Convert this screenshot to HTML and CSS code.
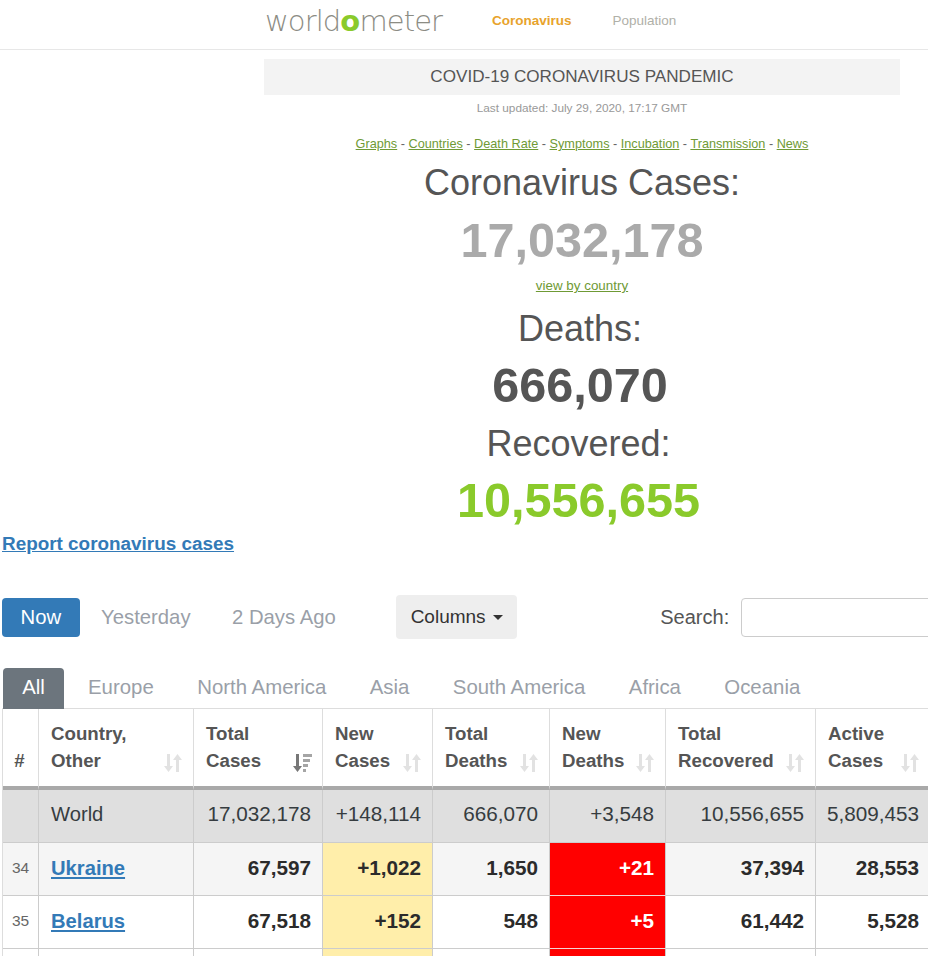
FILE: index.html
```html
<!DOCTYPE html>
<html lang="en">
<head>
  <meta charset="UTF-8" />
  <title>Worldometer - COVID-19 Coronavirus Pandemic</title>
  <link rel="stylesheet" href="styles.css">
</head>
<body>
  <div class="navbar">
    <a class="logo">world<span class="logo-o">o</span>meter</a>
    <a class="nav-link active">Coronavirus</a>
    <a class="nav-link">Population</a>
  </div>

  <div class="content">
    <div class="title-bar">COVID-19 CORONAVIRUS PANDEMIC</div>
    <div class="updated">Last updated: July 29, 2020, 17:17 GMT</div>
    <div class="quick-links">
      <a>Graphs</a> - <a>Countries</a> - <a>Death Rate</a> - <a>Symptoms</a> - <a>Incubation</a> - <a>Transmission</a> - <a>News</a>
    </div>
    <div class="counter-title">Coronavirus Cases:</div>
    <div class="counter counter-cases">17,032,178</div>
    <div class="view-link"><a>view by country</a></div>
    <div class="counter-group">
      <div class="counter-title deaths-title">Deaths:</div>
      <div class="counter counter-deaths">666,070</div>
      <div class="recovered">
        <div class="counter-title recovered-title">Recovered:</div>
        <div class="counter counter-recovered">10,556,655</div>
      </div>
    </div>
  </div>

  <a class="report-link">Report coronavirus cases</a>

  <div class="toolbar">
    <div class="day-pill selected">Now</div>
    <div class="day-pill">Yesterday</div>
    <div class="day-pill">2 Days Ago</div>
    <div class="columns-btn">Columns <span class="caret"></span></div>
    <div class="search">
      <label>Search:</label>
      <div class="search-input"></div>
    </div>
  </div>

  <div class="tabs">
    <div class="tab selected">All</div>
    <div class="tab">Europe</div>
    <div class="tab">North America</div>
    <div class="tab">Asia</div>
    <div class="tab">South America</div>
    <div class="tab">Africa</div>
    <div class="tab">Oceania</div>
  </div>

  <div class="table-wrap">
    <table>
      <colgroup>
        <col class="c-num"><col class="c-country"><col class="c-total"><col class="c-new"><col class="c-deaths"><col class="c-newd"><col class="c-rec"><col class="c-active">
      </colgroup>
      <thead>
        <tr>
          <th class="num-head">#</th>
          <th><div class="th-in"><span>Country,<br>Other</span><svg class="sort" viewBox="0 0 20 20"><path d="M4 1h3v12h3l-4.500 6L1 13h3zM13 19V7h-3l4.500-6L19 7h-3v12z"/></svg></div></th>
          <th><div class="th-in"><span>Total<br>Cases</span><svg class="sort sort-on" viewBox="0 0 20 20"><path class="dark" d="M4 1h3v12h3l-4.500 6L1 13h3z"/><path d="M11 1h9v3h-9zM11 6h7v3h-7zM11 11h5v3h-5zM11 16h3v3h-3z"/></svg></div></th>
          <th><div class="th-in"><span>New<br>Cases</span><svg class="sort" viewBox="0 0 20 20"><path d="M4 1h3v12h3l-4.500 6L1 13h3zM13 19V7h-3l4.500-6L19 7h-3v12z"/></svg></div></th>
          <th><div class="th-in"><span>Total<br>Deaths</span><svg class="sort" viewBox="0 0 20 20"><path d="M4 1h3v12h3l-4.500 6L1 13h3zM13 19V7h-3l4.500-6L19 7h-3v12z"/></svg></div></th>
          <th><div class="th-in"><span>New<br>Deaths</span><svg class="sort" viewBox="0 0 20 20"><path d="M4 1h3v12h3l-4.500 6L1 13h3zM13 19V7h-3l4.500-6L19 7h-3v12z"/></svg></div></th>
          <th><div class="th-in"><span>Total<br>Recovered</span><svg class="sort" viewBox="0 0 20 20"><path d="M4 1h3v12h3l-4.500 6L1 13h3zM13 19V7h-3l4.500-6L19 7h-3v12z"/></svg></div></th>
          <th><div class="th-in"><span>Active<br>Cases</span><svg class="sort" viewBox="0 0 20 20"><path d="M4 1h3v12h3l-4.500 6L1 13h3zM13 19V7h-3l4.500-6L19 7h-3v12z"/></svg></div></th>
        </tr>
      </thead>
      <tbody>
        <tr class="world">
          <td></td><td class="name">World</td><td>17,032,178</td><td>+148,114</td><td>666,070</td><td>+3,548</td><td>10,556,655</td><td>5,809,453</td>
        </tr>
        <tr class="odd">
          <td class="rank">34</td><td class="name"><a>Ukraine</a></td><td>67,597</td><td class="new-cases">+1,022</td><td>1,650</td><td class="new-deaths">+21</td><td>37,394</td><td>28,553</td>
        </tr>
        <tr>
          <td class="rank">35</td><td class="name"><a>Belarus</a></td><td>67,518</td><td class="new-cases">+152</td><td>548</td><td class="new-deaths">+5</td><td>61,442</td><td>5,528</td>
        </tr>
        <tr class="cut">
          <td></td><td></td><td></td><td class="new-cases"></td><td></td><td class="new-deaths"></td><td></td><td></td>
        </tr>
      </tbody>
    </table>
  </div>
</body>
</html>
```

FILE: styles.css
```css
html, body {
  margin: 0;
  height: 960px;
  overflow: hidden;
}

body {
  background-color: #fff;
  font-family: "Liberation Sans", Arial, sans-serif;
  color: #555;
}

.navbar {
  display: flex;
  align-items: center;
  height: 49px;
  padding-left: 265px;
  border-bottom: 1px solid #e7e7e7;
}

.logo {
  width: 227px;
  flex: none;
  font-family: "DejaVu Sans", sans-serif;
  font-weight: 200;
  font-size: 29px;
  letter-spacing: -0.9px;
  color: #8c8c84;
  margin-top: -8px;
}

.logo-o {
  color: #8aca2b;
  font-weight: 700;
}

.nav-link {
  margin-right: 41px;
  margin-top: -8px;
  font-size: 13.500px;
  color: #b0b0a8;
}

.nav-link.active {
  color: #e8a32c;
  font-weight: bold;
}

.content {
  width: 636px;
  margin: 9px 0 0 264px;
  text-align: center;
}

.title-bar {
  height: 36px;
  line-height: 36px;
  background-color: #f3f3f3;
  font-size: 17.100px;
  color: #555;
}

.updated {
  margin-top: 5px;
  line-height: 16px;
  font-size: 11.800px;
  color: #999;
}

.quick-links {
  margin-top: 20px;
  line-height: 16px;
  font-size: 12.700px;
  color: #666;
}

.quick-links a, .view-link a {
  color: #6f9a35;
  text-decoration: underline;
}

.counter-title {
  margin-top: 9px;
  line-height: 44px;
  font-size: 36px;
  color: #555;
}

.counter {
  margin-top: 5px;
  line-height: 58px;
  font-size: 48.600px;
  font-weight: bold;
}

.counter-cases { margin-top: 6px; color: #aaa; }
.counter-deaths { color: #555; }
.counter-recovered { color: #8aca2b; }

.view-link {
  margin-top: 9px;
  line-height: 16px;
  font-size: 13.400px;
}

.counter-group { padding-right: 4px; }
.recovered { padding-right: 3px; }
.deaths-title { margin-top: 13px; }
.recovered-title { margin-top: 8px; }

.report-link {
  display: block;
  margin: 3px 0 0 2px;
  line-height: 24px;
  font-size: 18.900px;
  font-weight: bold;
  color: #337ab7;
  text-decoration: underline;
}

.toolbar {
  display: flex;
  align-items: center;
  margin: 39px 0 0 2px;
  height: 44px;
}

.day-pill {
  flex: none;
  margin-left: 1.500px;
  padding: 0 20px;
  height: 39px;
  line-height: 38px;
  font-size: 20.300px;
  color: #9a9fa8;
  white-space: nowrap;
}

.day-pill.selected {
  margin-left: 0;
  padding: 0 18.500px;
  background-color: #337ab7;
  border-radius: 4px;
  color: #fff;
}

.columns-btn {
  flex: none;
  margin-left: 40.500px;
  width: 121px;
  height: 44px;
  line-height: 44px;
  text-align: center;
  background-color: #eee;
  border-radius: 4px;
  font-size: 19px;
  color: #333;
}

.caret {
  display: inline-block;
  margin-left: 2px;
  vertical-align: middle;
  border-top: 5px solid #333;
  border-left: 5px solid transparent;
  border-right: 5px solid transparent;
}

.search {
  display: flex;
  flex: none;
  align-items: center;
  margin-left: 143px;
  gap: 12px;
}

.search label {
  font-size: 20px;
  color: #555;
}

.search-input {
  width: 220px;
  height: 37px;
  border: 1px solid #ccc;
  border-radius: 4px;
}

.tabs {
  display: flex;
  margin: 29px 0 0 3px;
}

.tab {
  height: 41px;
  line-height: 39px;
  margin-right: 43.400px;
  font-size: 20.400px;
  color: #9a9fa8;
}

.tab:first-child { margin-right: 24px; }

.tab.selected {
  width: 61px;
  text-align: center;
  background-color: #6c757d;
  border-radius: 4px 4px 0 0;
  color: #fff;
}

.table-wrap {
  height: 248px;
  margin-top: -1px;
  margin-left: 2px;
  overflow: hidden;
}

table {
  table-layout: fixed;
  width: 928px;
  border-collapse: separate;
  border-spacing: 0;
  border-top: 1px solid #ddd;
  border-left: 1px solid #ddd;
}

.c-num { width: 36px; }
.c-country { width: 155px; }
.c-total { width: 129px; }
.c-new { width: 110px; }
.c-deaths { width: 117px; }
.c-newd { width: 116px; }
.c-rec { width: 150px; }
.c-active { width: 115px; }

th {
  height: 76px;
  box-sizing: border-box;
  padding: 11px 10px 12px 12px;
  vertical-align: bottom;
  text-align: left;
  font-size: 18.700px;
  line-height: 27px;
  color: #555;
  border-right: 1px solid #ddd;
  border-bottom: 4px solid #a9a9a9;
}

.num-head {
  padding: 0 2px 12px 0;
  text-align: center;
}

.th-in {
  display: flex;
  justify-content: space-between;
  align-items: flex-end;
}

.sort {
  flex: none;
  width: 20px;
  height: 20px;
  margin-bottom: 1px;
  fill: #e2e2e2;
}

.sort-on { fill: #a5a5a5; }
.sort-on .dark { fill: #777; }

td {
  height: 53px;
  box-sizing: border-box;
  padding: 0 11px 2px 8px;
  text-align: right;
  font-size: 20.700px;
  font-weight: bold;
  color: #2b2b2b;
  border-right: 1px solid #ccc;
  border-bottom: 1px solid #ccc;
}

.world td {
  padding-bottom: 4px;
  background-color: #dfdfdf;
  font-weight: normal;
  color: #363c40;
}

.odd td { background-color: #f5f5f5; }

td.name {
  padding-left: 12px;
  text-align: left;
  font-size: 20.200px;
}

td.name a {
  color: #337ab7;
  text-decoration: underline;
}

td.rank {
  padding: 0 0 2px;
  text-align: center;
  font-size: 15.500px;
  font-weight: normal;
  color: #666;
}

td.new-cases { background-color: #ffeeaa; }

td.new-deaths {
  background-color: #f00;
  border-bottom-color: #f2d5d5;
  color: #fff;
}
```
